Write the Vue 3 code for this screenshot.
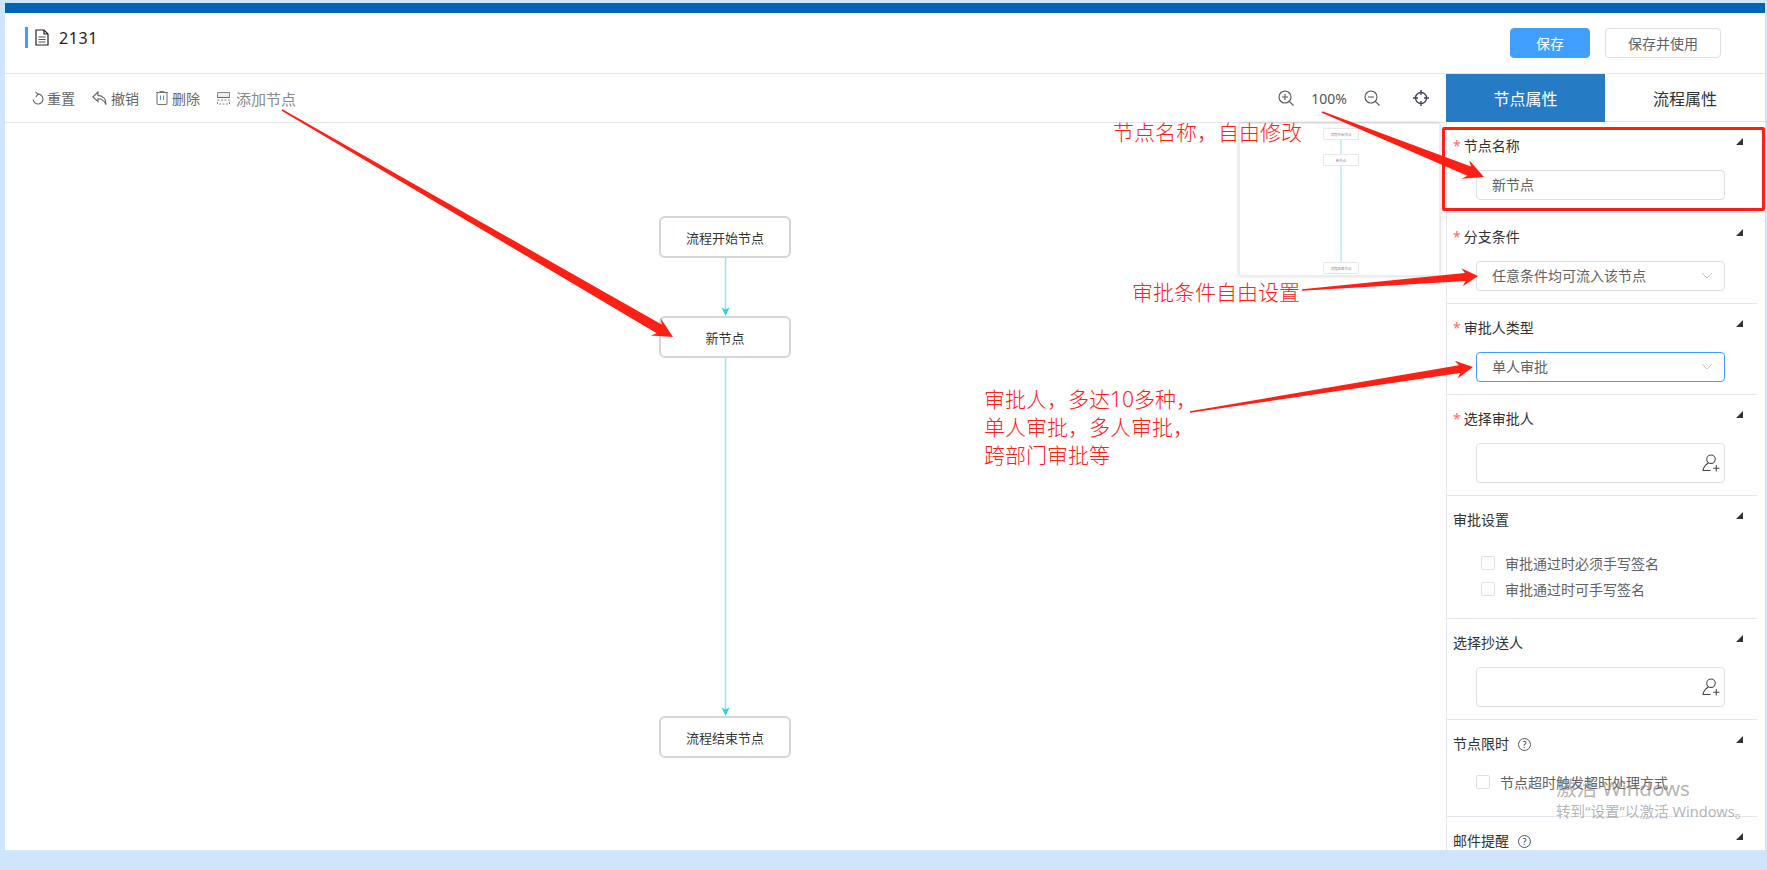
<script setup>
const leftTools = [
  { label: '重置', icon: 'reset' },
  { label: '撤销', icon: 'undo' },
  { label: '删除', icon: 'trash' },
  { label: '添加节点', icon: 'add', muted: true },
];

const nodes = [
  { label: '流程开始节点', x: 654, y: 93 },
  { label: '新节点', x: 654, y: 193 },
  { label: '流程结束节点', x: 654, y: 593 },
];

const miniNodes = [
  { label: '流程开始节点', y: 4 },
  { label: '新节点', y: 30 },
  { label: '流程结束节点', y: 138 },
];

// tail, tip, half shaft width, half head width, head length
const arrows = [
  [282, 110, 673, 337, 5, 10, 20],
  [1322, 112, 1484, 177, 5, 10, 20],
  [1302, 290, 1478, 276, 4, 9, 16],
  [1190, 412, 1473, 367, 4, 9, 17],
];

const arrowPoints = ([x1, y1, x2, y2, shaft, head, len]) => {
  const d = Math.hypot(x2 - x1, y2 - y1);
  const ux = (x2 - x1) / d;
  const uy = (y2 - y1) / d;
  const at = (back, side) =>
    `${(x2 - ux * back - uy * side).toFixed(1)},${(y2 - uy * back + ux * side).toFixed(1)}`;
  return [
    at(d, 0.8),
    at(len * 0.8, shaft),
    at(len, head),
    `${x2},${y2}`,
    at(len, -head),
    at(len * 0.8, -shaft),
    at(d, -0.8),
  ].join(' ');
};
</script>

<template>
  <div class="page">
    <div class="topbar"></div>

    <header class="header">
      <div class="title">
        <svg class="file-icon" viewBox="0 0 14 17" width="14" height="17" fill="none" stroke="#222" stroke-width="1.2">
          <path d="M1 1h8l4 4v11H1z" />
          <path d="M9 1v4h4" />
          <path d="M3.5 8h7M3.5 10.5h7M3.5 13h7" stroke="#555" />
        </svg>
        <span>2131</span>
      </div>
      <div class="header-actions">
        <button class="btn primary">保存</button>
        <button class="btn">保存并使用</button>
      </div>
    </header>

    <main class="main">
      <section class="editor">
        <div class="toolbar">
          <div v-for="tool in leftTools" :key="tool.label" class="tool" :class="[tool.icon, { muted: tool.muted }]">
            <svg v-if="tool.icon === 'reset'" viewBox="0 0 12 14" width="12" height="14" fill="none" stroke="#666" stroke-width="1.1">
              <path d="M5.5 3.2A4.9 4.9 0 1 1 1.2 8.5" />
              <path d="M3.5 .8 6 3.2 3.8 5.8" />
            </svg>
            <svg v-else-if="tool.icon === 'undo'" viewBox="0 0 15 14" width="15" height="14" fill="none" stroke="#666" stroke-width="1.1">
              <path d="M6 1 .8 6 6 10.5V7.8c3.5 0 6 1.5 7.8 5.4.6-5-2.8-8.6-7.8-8.8z" />
            </svg>
            <svg v-else-if="tool.icon === 'trash'" viewBox="0 0 12 14" width="12" height="14" fill="none" stroke="#777" stroke-width="1.1">
              <path d="M0 1.5h12M4 1V.5h4V1" />
              <rect x="1" y="1.5" width="10" height="12" rx="1.5" />
              <path d="M4.5 4.5v4.5M7.5 4.5v4.5" stroke="#5b8fc7" />
            </svg>
            <svg v-else viewBox="0 0 13 14" width="13" height="14" fill="none" stroke="#888" stroke-width="1">
              <path d="M.5 1.5h12v5H.5z" fill="#eee" />
              <path d="M.5 9h12v4H.5z" stroke-dasharray="2 1.5" />
              <path d="M.5 6.5h12" stroke="#666" />
            </svg>
            <span>{{ tool.label }}</span>
          </div>

          <div class="zoom-tools">
            <svg viewBox="0 0 16 16" width="16" height="16" fill="none" stroke="#555" stroke-width="1.1">
              <circle cx="7" cy="7" r="6" />
              <path d="M11.3 11.3 15.5 15.5M4 7h6M7 4v6" />
            </svg>
            <span class="percent">100%</span>
            <svg viewBox="0 0 16 16" width="16" height="16" fill="none" stroke="#555" stroke-width="1.1">
              <circle cx="7" cy="7" r="6" />
              <path d="M11.3 11.3 15.5 15.5M4 7h6" />
            </svg>
            <svg class="target" viewBox="0 0 16 16" width="16" height="16" fill="none" stroke="#445" stroke-width="1.4">
              <circle cx="8" cy="8" r="5.5" />
              <path d="M8 0v5M8 11v5M0 8h5M11 8h5" />
            </svg>
          </div>
        </div>

        <div class="canvas">
          <svg class="edges" width="1441" height="727">
            <path d="M720.5 135V187M720.5 235V587" stroke="#8ee8ef" stroke-width="1.5" fill="none" />
            <path d="M716.5 184.5 720.5 186.5 724.5 184.5 720.5 193z" fill="#2ed3e6" />
            <path d="M716.5 584.5 720.5 586.5 724.5 584.5 720.5 593z" fill="#2ed3e6" />
          </svg>
          <div
            v-for="node in nodes"
            :key="node.label + node.y"
            class="node"
            :style="{ left: node.x + 'px', top: node.y + 'px' }"
          >
            {{ node.label }}
          </div>

          <div class="minimap">
            <div class="mini-line"></div>
            <div v-for="node in miniNodes" :key="node.y" class="mini-node" :style="{ top: node.y + 'px' }">
              <span>{{ node.label }}</span>
            </div>
          </div>
        </div>
      </section>

      <aside class="panel">
        <div class="tabs">
          <div class="tab active">节点属性</div>
          <div class="tab">流程属性</div>
        </div>

        <div class="group">
          <div class="group-head"><span class="label"><i>*</i>节点名称</span><span class="fold"></span></div>
          <div class="control">新节点</div>
        </div>

        <div class="group">
          <div class="group-head"><span class="label"><i>*</i>分支条件</span><span class="fold"></span></div>
          <div class="control select">
            任意条件均可流入该节点
            <svg viewBox="0 0 12 7" width="12" height="7" fill="none" stroke="#c0c4cc" stroke-width="1"><path d="M1 1l5 5 5-5" /></svg>
          </div>
        </div>

        <div class="group">
          <div class="group-head"><span class="label"><i>*</i>审批人类型</span><span class="fold"></span></div>
          <div class="control select focused">
            单人审批
            <svg viewBox="0 0 12 7" width="12" height="7" fill="none" stroke="#c0c4cc" stroke-width="1"><path d="M1 1l5 5 5-5" /></svg>
          </div>
        </div>

        <div class="group">
          <div class="group-head"><span class="label"><i>*</i>选择审批人</span><span class="fold"></span></div>
          <div class="control picker">
            <svg viewBox="0 0 17 17" width="18" height="18" fill="none" stroke="#444" stroke-width="1"><circle cx="8.5" cy="5" r="4" /><path d="M6 8.5C3.5 10 1.5 12 1 15.5h7M10.5 13.5h6M13.5 10.5v6" /></svg>
          </div>
        </div>

        <div class="group checks-top">
          <div class="group-head"><span class="label">审批设置</span><span class="fold"></span></div>
          <label class="check"><span class="box"></span>审批通过时必须手写签名</label>
          <label class="check"><span class="box"></span>审批通过时可手写签名</label>
        </div>

        <div class="group">
          <div class="group-head"><span class="label">选择抄送人</span><span class="fold"></span></div>
          <div class="control picker">
            <svg viewBox="0 0 17 17" width="18" height="18" fill="none" stroke="#444" stroke-width="1"><circle cx="8.5" cy="5" r="4" /><path d="M6 8.5C3.5 10 1.5 12 1 15.5h7M10.5 13.5h6M13.5 10.5v6" /></svg>
          </div>
        </div>

        <div class="group limit">
          <div class="group-head"><span class="label">节点限时<b class="help">?</b></span><span class="fold"></span></div>
          <label class="check narrow"><span class="box"></span>节点超时触发超时处理方式</label>
        </div>

        <div class="group">
          <div class="group-head"><span class="label">邮件提醒<b class="help">?</b></span><span class="fold"></span></div>
        </div>
      </aside>
    </main>

    <svg class="arrows" width="1767" height="870">
      <polygon v-for="(arrow, i) in arrows" :key="i" :points="arrowPoints(arrow)" fill="#fe2015" />
    </svg>
    <div class="red-box"></div>
    <div class="note note-name">节点名称，自由修改</div>
    <div class="note note-cond">审批条件自由设置</div>
    <div class="note note-user">审批人，多达10多种，<br />单人审批，多人审批，<br />跨部门审批等</div>

    <div class="watermark">
      <div class="wm-title">激活 Windows</div>
      <div class="wm-sub">转到“设置”以激活 Windows。</div>
    </div>
  </div>
</template>

<style>
body {
  background: #cfe5fb;
}
</style>

<style scoped>
.page {
  position: relative;
  width: 1767px;
  height: 870px;
  box-sizing: border-box;
  padding: 3px 2px 20px 5px;
  display: flex;
  flex-direction: column;
  overflow: hidden;
  font-family: "Noto Sans", "Noto Sans CJK SC", sans-serif;
  font-size: 14px;
  color: #303133;
}

.topbar {
  height: 10px;
  background: #0265b0;
  flex: none;
}

.header {
  height: 61px;
  box-sizing: border-box;
  flex: none;
  background: #fff;
  border-bottom: 1px solid #e4e7ed;
  display: flex;
  justify-content: space-between;
  padding: 14px 44px 0 20px;
}

.title {
  height: 21px;
  display: flex;
  align-items: center;
  gap: 10px;
  border-left: 3px solid #409eff;
  padding-left: 7px;
  font-size: 16px;
  letter-spacing: 0.6px;
  color: #222;
}

.header-actions {
  display: flex;
  gap: 15px;
  padding-top: 1px;
}

.btn {
  height: 30px;
  width: 116px;
  border: 1px solid #dcdfe6;
  border-radius: 4px;
  background: #fff;
  color: #606266;
  font: inherit;
  padding: 0;
}

.btn.primary {
  width: 80px;
  border-color: #409eff;
  background: #409eff;
  color: #fff;
}

.main {
  flex: 1;
  min-height: 0;
  display: flex;
  background: #fff;
}

.editor {
  width: 1441px;
  flex: none;
  display: flex;
  flex-direction: column;
}

.toolbar {
  height: 49px;
  box-sizing: border-box;
  flex: none;
  border-bottom: 1px solid #e4e7ed;
  display: flex;
  align-items: center;
  gap: 17px;
  padding: 0 17px 0 27px;
  color: #666;
}

.tool {
  display: flex;
  align-items: center;
  gap: 4px;
}

.tool.reset {
  gap: 3px;
}

.tool.add {
  gap: 6px;
}

.tool.muted {
  color: #888;
  font-size: 15px;
}

.zoom-tools {
  margin-left: auto;
  display: flex;
  align-items: center;
  gap: 17px;
  color: #555;
}

.target {
  margin-left: 16px;
}

.canvas {
  position: relative;
  flex: 1;
}

.edges {
  position: absolute;
  left: 0;
  top: 0;
}

.node {
  position: absolute;
  width: 132px;
  height: 42px;
  box-sizing: border-box;
  border: 2px solid #d5d5d5;
  border-radius: 6px;
  background: #fff;
  display: flex;
  align-items: center;
  justify-content: center;
  font-size: 13px;
  color: #333;
}

.minimap {
  position: absolute;
  left: 1234px;
  top: 0;
  width: 201px;
  height: 153px;
  box-sizing: border-box;
  background: #fff;
  border: 1px solid #eee;
  box-shadow: 0 0 4px rgba(0, 0, 0, 0.2);
}

.mini-line {
  position: absolute;
  left: 100px;
  top: 14px;
  width: 2px;
  height: 128px;
  background: #c8f2f6;
}

.mini-node {
  position: absolute;
  left: 83px;
  width: 36px;
  height: 12px;
  box-sizing: border-box;
  border: 1px solid #e8e8e8;
  border-radius: 1px;
  background: #fff;
  display: flex;
  align-items: center;
  justify-content: center;
  font-size: 3.5px;
  color: #888;
  white-space: nowrap;
}

.panel {
  width: 319px;
  box-sizing: border-box;
  flex: none;
  padding-right: 8px;
  overflow: hidden;
}

.tabs {
  display: flex;
  height: 48px;
  margin-right: -8px;
  box-sizing: border-box;
  border-bottom: 1px solid #e4e7ed;
}

.tab {
  flex: 1;
  display: flex;
  align-items: center;
  justify-content: center;
  font-size: 16px;
  color: #303133;
}

.tab.active {
  flex: none;
  width: 159px;
  height: 48px;
  background: #267bc5;
  color: #fff;
}

.group {
  padding: 0 0 12px 6px;
  border-left: 1px solid #e4e7ed;
  border-bottom: 1px solid #e4e7ed;
}

.group:last-child {
  border-bottom: 0;
  padding-bottom: 40px;
}

.checks-top {
  padding-bottom: 16px;
}

.limit {
  padding-bottom: 21px;
}

.group-head {
  height: 48px;
  box-sizing: border-box;
  padding: 0 14px 2px 0;
  display: flex;
  align-items: center;
  justify-content: space-between;
}

.label i {
  font-style: normal;
  color: #f56c6c;
  margin-right: 3px;
}

.help {
  display: inline-block;
  width: 11px;
  height: 11px;
  margin-left: 9px;
  border: 1px solid #555;
  border-radius: 50%;
  font-size: 9px;
  font-weight: 400;
  line-height: 11px;
  text-align: center;
  vertical-align: 1px;
}

.fold {
  width: 0;
  height: 0;
  margin-bottom: 8px;
  border-left: 7px solid transparent;
  border-bottom: 7px solid #333;
}

.control {
  width: 249px;
  height: 30px;
  margin-left: 23px;
  box-sizing: border-box;
  border: 1px solid #dcdfe6;
  border-radius: 4px;
  padding: 0 11px 2px 15px;
  display: flex;
  align-items: center;
  justify-content: space-between;
  color: #606266;
}

.control.focused {
  border-color: #409eff;
}

.control.picker {
  height: 40px;
  justify-content: flex-end;
  padding: 0 4px 0 0;
}

.check {
  height: 26px;
  margin-left: 28px;
  display: flex;
  align-items: center;
  gap: 10px;
  color: #606266;
}

.check:first-of-type {
  margin-top: 6px;
}

.check.narrow {
  margin: 1px 0 0 23px;
  gap: 10px;
}

.box {
  width: 14px;
  height: 14px;
  box-sizing: border-box;
  border: 1px solid #dcdfe6;
  border-radius: 2px;
  background: #fff;
}

.arrows {
  position: absolute;
  left: 0;
  top: 0;
  pointer-events: none;
}

.red-box {
  position: absolute;
  left: 1442px;
  top: 127px;
  width: 323px;
  height: 84px;
  box-sizing: border-box;
  border: 3px solid #fe1e14;
  border-radius: 2px;
}

.note {
  position: absolute;
  font-size: 21px;
  font-weight: 300;
  line-height: 28px;
  color: #fe2015;
  white-space: nowrap;
}

.note-name {
  left: 1113px;
  top: 118px;
}

.note-cond {
  left: 1132px;
  top: 278px;
}

.note-user {
  left: 984px;
  top: 385px;
}

.watermark {
  position: absolute;
  left: 1556px;
  top: 775px;
  color: rgba(130, 130, 130, 0.6);
  white-space: nowrap;
  pointer-events: none;
}

.wm-title {
  font-size: 20.5px;
  line-height: 26px;
}

.wm-sub {
  font-size: 14.6px;
  line-height: 20px;
}
</style>
